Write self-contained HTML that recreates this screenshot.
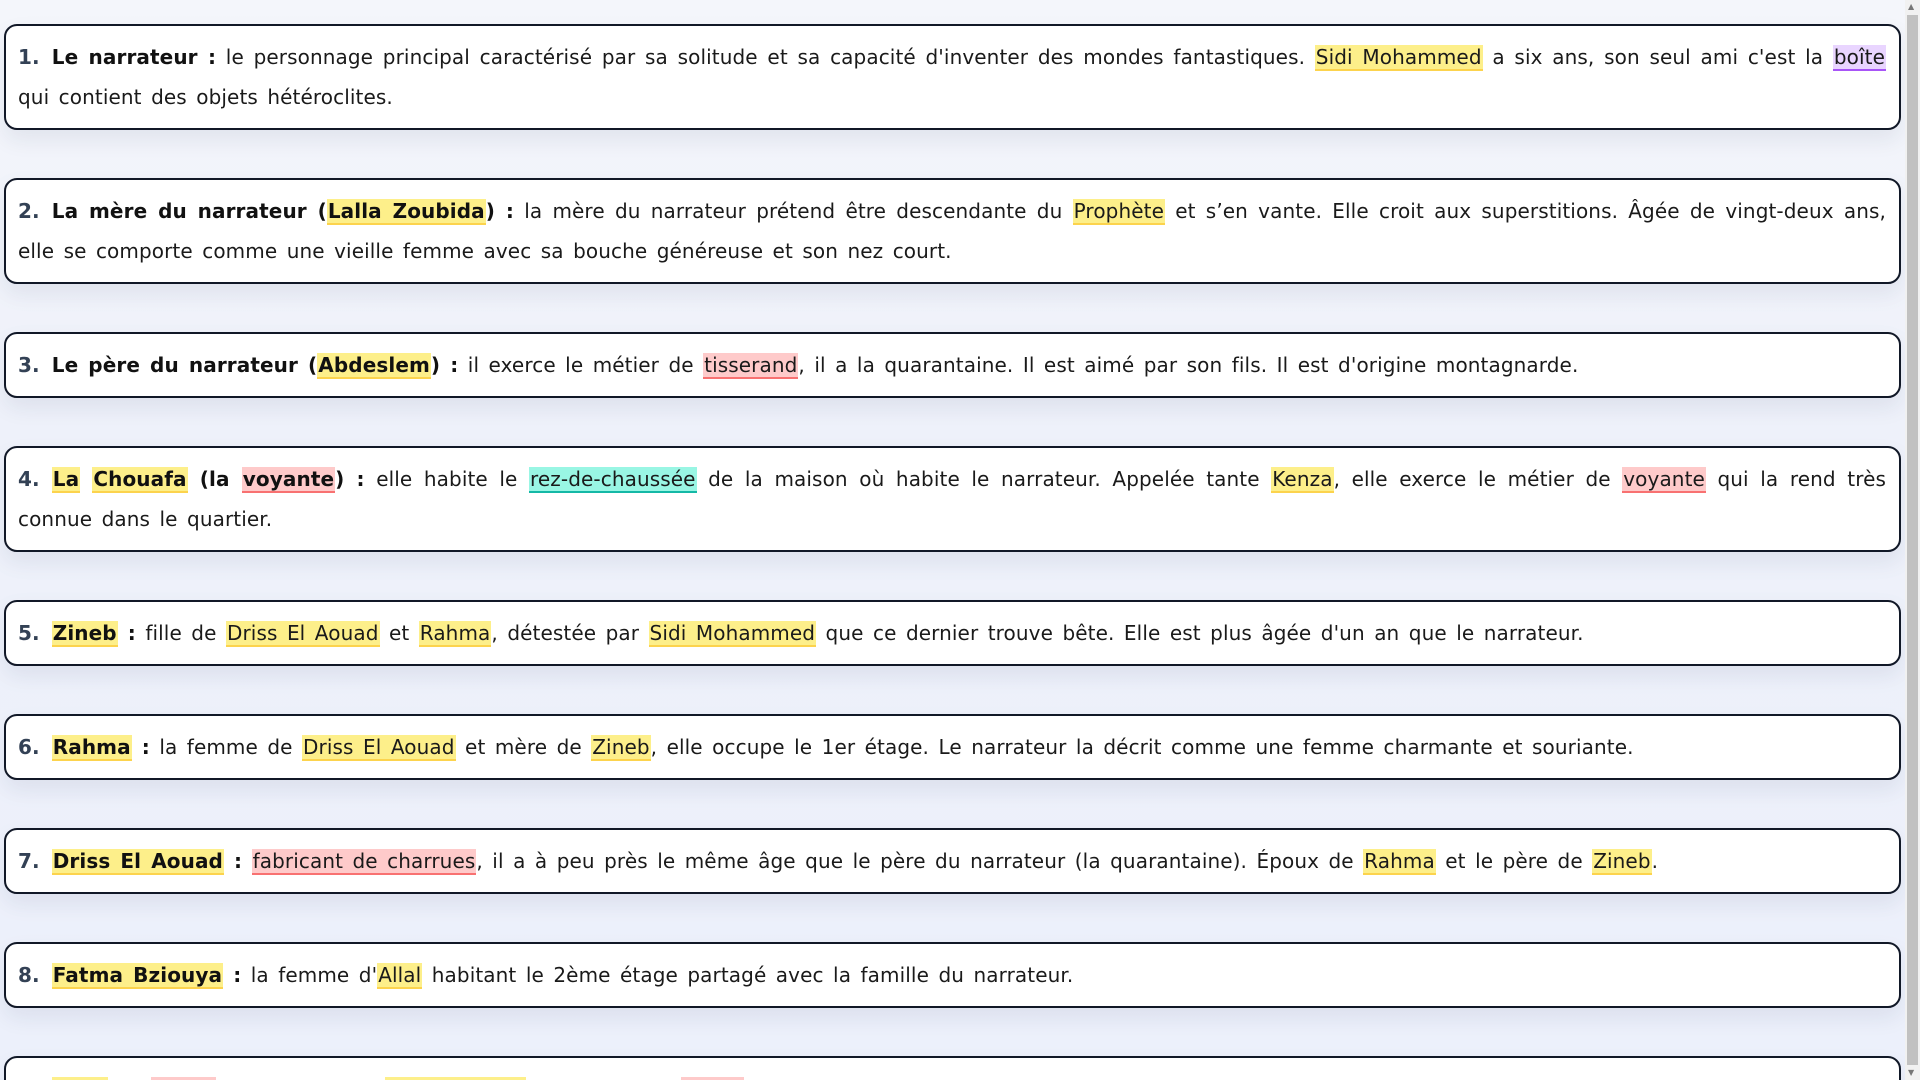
<!DOCTYPE html>
<html><head><meta charset="utf-8">
<style>
html,body{margin:0;padding:0;overflow:hidden;width:1920px;height:1080px}
body{background:linear-gradient(180deg,#f4f6fb 0%,#eef1fa 40%,#ecf0fb 100%);font-family:"DejaVu Sans","Liberation Sans",sans-serif;color:#1a1a1a}
.clip{position:absolute;left:0;top:0;width:1920px;height:1080px;overflow:hidden}
.wrap{position:absolute;left:4px;top:24px;width:1897px}
.card{box-sizing:border-box;background:#fff;border:2px solid #111827;border-radius:13px;padding:11px 13px 11px 12px;margin-bottom:48px;font-size:20px;line-height:40px;letter-spacing:0.1px;word-spacing:3px;text-align:justify;box-shadow:0 10px 22px rgba(30,40,80,0.08)}
.n{color:#334155;font-weight:bold;margin-right:12px}
b{font-weight:bold;color:#111}
.y{background:#fdef8a;border-bottom:2px solid #fcd34d;padding:0 1px}
.p{background:#e9d5ff;border-bottom:2px solid #a855f7;padding:0 1px}
.r{background:#fecaca;border-bottom:2px solid #f87171;padding:0 1px}
.t{background:#99f6e4;border-bottom:2px solid #14b8a6;padding:0 1px}
.sb{position:absolute;right:0;top:0;width:15px;height:1080px;background:#f1f1f1}
.th{position:absolute;left:2px;top:15px;width:11px;height:1050px;background:#c1c1c1}
.ar{position:absolute;left:3px;font-size:8px;color:#777;line-height:10px}
</style></head><body>
<div class="clip">
<div class="wrap">
<div class="card"><span class="n">1.</span><b>Le narrateur :</b> le personnage principal caractérisé par sa solitude et sa capacité d'inventer des mondes fantastiques. <span class="y">Sidi Mohammed</span> a six ans, son seul ami c'est la <span class="p">boîte</span> qui contient des objets hétéroclites.</div>
<div class="card"><span class="n">2.</span><b>La mère du narrateur (<span class="y">Lalla Zoubida</span>) :</b> la mère du narrateur prétend être descendante du <span class="y">Prophète</span> et s’en vante. Elle croit aux superstitions. Âgée de vingt-deux ans, elle se comporte comme une vieille femme avec sa bouche généreuse et son nez court.</div>
<div class="card"><span class="n">3.</span><b>Le père du narrateur (<span class="y">Abdeslem</span>) :</b> il exerce le métier de <span class="r">tisserand</span>, il a la quarantaine. Il est aimé par son fils. Il est d'origine montagnarde.</div>
<div class="card"><span class="n">4.</span><b><span class="y">La</span> <span class="y">Chouafa</span> (la <span class="r">voyante</span>) :</b> elle habite le <span class="t">rez-de-chaussée</span> de la maison où habite le narrateur. Appelée tante <span class="y">Kenza</span>, elle exerce le métier de <span class="r">voyante</span> qui la rend très connue dans le quartier.</div>
<div class="card"><span class="n">5.</span><b><span class="y">Zineb</span> :</b> fille de <span class="y">Driss El Aouad</span> et <span class="y">Rahma</span>, détestée par <span class="y">Sidi Mohammed</span> que ce dernier trouve bête. Elle est plus âgée d'un an que le narrateur.</div>
<div class="card"><span class="n">6.</span><b><span class="y">Rahma</span> :</b> la femme de <span class="y">Driss El Aouad</span> et mère de <span class="y">Zineb</span>, elle occupe le 1er étage. Le narrateur la décrit comme une femme charmante et souriante.</div>
<div class="card"><span class="n">7.</span><b><span class="y">Driss El Aouad</span> :</b> <span class="r">fabricant de charrues</span>, il a à peu près le même âge que le père du narrateur (la quarantaine). Époux de <span class="y">Rahma</span> et le père de <span class="y">Zineb</span>.</div>
<div class="card"><span class="n">8.</span><b><span class="y">Fatma Bziouya</span> :</b> la femme d'<span class="y">Allal</span> habitant le 2ème étage partagé avec la famille du narrateur.</div>
<div class="card"><span class="n">9.</span><b><span class="y">Lalla</span> et <span class="r">Aïcha</span> :</b> une amie de <span class="y">Lalla Zoubida</span> qui vend des <span class="r">bijoux</span> et des objets.</div>
</div>
<div class="sb"><div class="ar" style="top:2px">▲</div><div class="th"></div><div class="ar" style="top:1068px">▼</div></div>
</div>
</body></html>
